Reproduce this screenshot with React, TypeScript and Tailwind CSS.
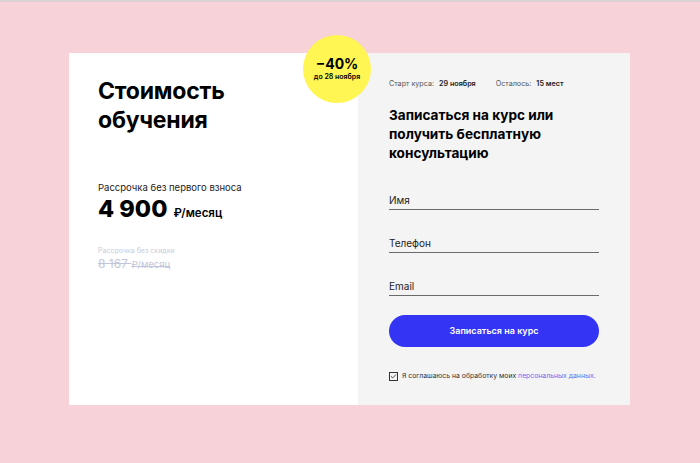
import { Check } from "lucide-react";

const font = { fontFamily: "Inter, 'Noto Sans', sans-serif" };

const Field = ({ label }: { label: string }) => (
  <div className="border-b border-[#6b6b6b] pb-[2px] text-[10px] leading-[13px] text-[#222]">
    {label}
  </div>
);

export default function App() {
  return (
    <div
      className="flex h-[463px] w-[700px] flex-col bg-[#f7d2d8] font-[Inter,'Noto_Sans',sans-serif]"
      style={font}
    >
      {/* browser tab strip */}
      <div className="h-[2px] w-full bg-[#d8d2d3]"></div>
      <div className="ml-[69px] mt-[51px] flex h-[352px] w-[561px]">
        {/* Price side */}
        <div className="relative flex w-[289px] flex-col bg-white pl-[29px] pt-[24px]">
          <div className="absolute right-[-13px] top-[-18px] flex h-[68px] w-[68px] flex-col items-center justify-center rounded-full bg-[#fff553]">
            <span className="text-[14px] font-bold leading-[16px] text-black">−40%</span>
            <span className="text-[7px] font-semibold leading-[10px] text-black">до 28 ноября</span>
          </div>
          <h1 className="text-[23px] font-bold leading-[29px] tracking-[-0.2px] text-black">
            Стоимость
            <br />
            обучения
          </h1>
          <div className="mt-[47px] text-[9.5px] leading-[12px] text-[#222]">
            Рассрочка без первого взноса
          </div>
          <div className="mt-[2px] flex items-baseline gap-[6px] text-black">
            <span className="text-[23.5px] font-extrabold leading-[26px]">4 900</span>
            <span className="text-[11.5px] font-semibold">₽/месяц</span>
          </div>
          <div className="mt-[24px] text-[7px] leading-[10px] text-[#c9cbdc]">
            Рассрочка без скидки
          </div>
          <div className="text-[12px] leading-[16px] text-[#c3c6da] line-through">
            8 167 <span className="text-[9.5px]">₽/месяц</span>
          </div>
        </div>
        {/* Form side */}
        <div className="flex flex-1 flex-col bg-[#f4f4f4] pl-[31px] pr-[31px] pt-[26px]">
          <div className="flex text-[7.2px] leading-[10px] text-[#555]">
            <span>Старт курса:</span>
            <span className="ml-[5px] font-semibold text-[#222]">29 ноября</span>
            <span className="ml-[20px]">Осталось:</span>
            <span className="ml-[5px] font-semibold text-[#222]">15 мест</span>
          </div>
          <h2 className="mt-[17px] text-[13.6px] font-bold leading-[19px] text-black">
            Записаться на курс или
            <br />
            получить бесплатную
            <br />
            консультацию
          </h2>
          <div className="mt-[31px] flex flex-col gap-[27px]">
            <Field label="Имя" />
            <Field label="Телефон" />
            <Field label="Email" />
          </div>
          <button className="mt-[19px] h-[32px] w-full rounded-full bg-[#3434f4] text-[9px] font-semibold text-white">
            Записаться на курс
          </button>
          <div className="mt-[24px] flex items-center gap-[4px] whitespace-nowrap text-[6.85px] text-[#333]">
            <span className="flex h-[9px] w-[9px] shrink-0 items-center justify-center border border-[#333]">
              <Check size={7} strokeWidth={3} />
            </span>
            <span>
              Я соглашаюсь на обработку моих{" "}
              <span className="text-[#6b6bf2]">персональных данных.</span>
            </span>
          </div>
        </div>
      </div>
    </div>
  );
}
